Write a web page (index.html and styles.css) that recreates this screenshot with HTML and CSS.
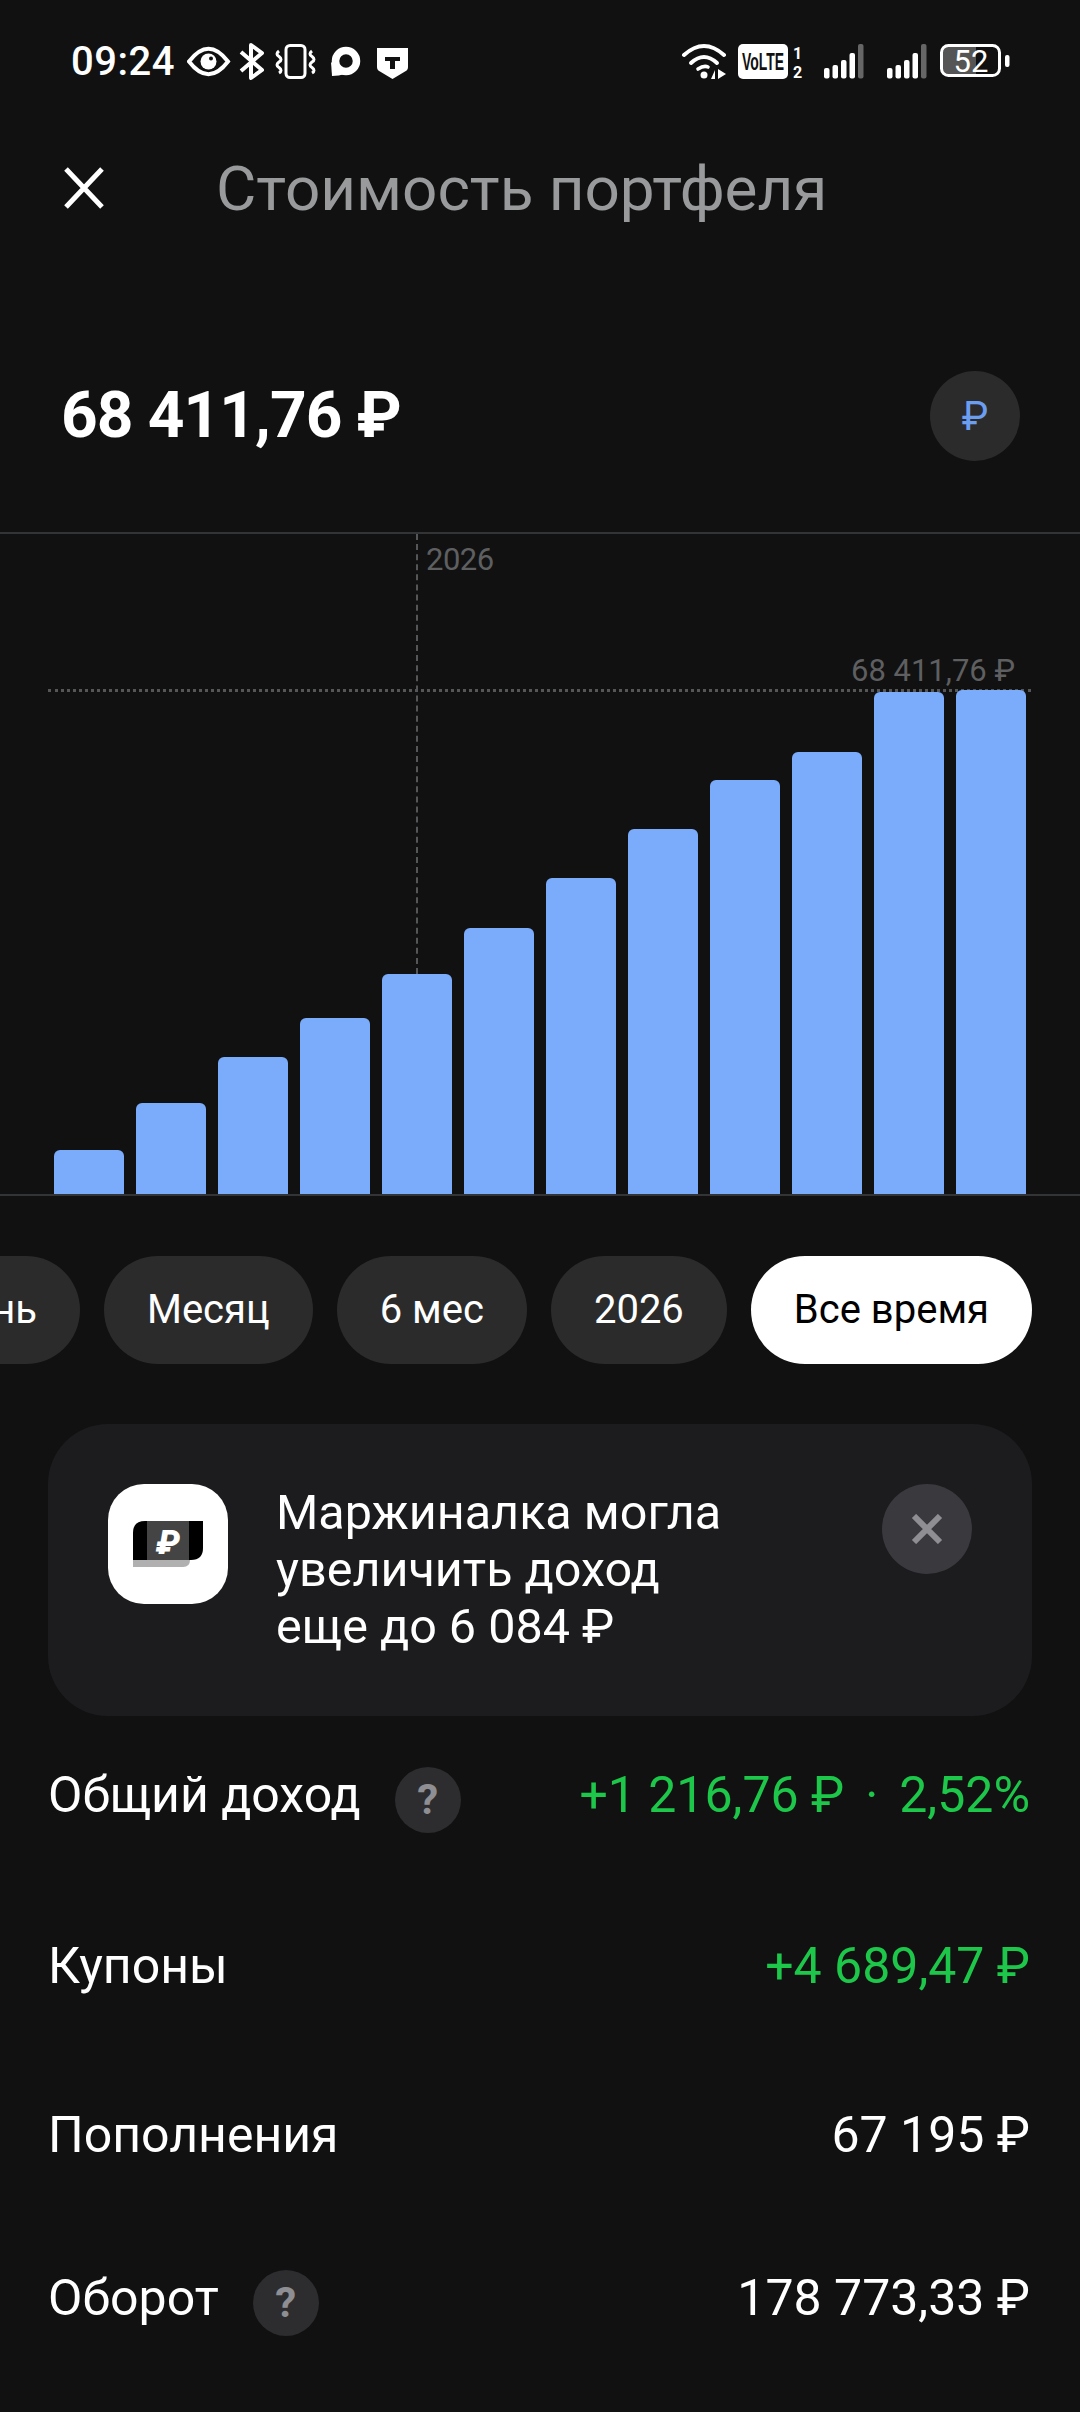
FILE: index.html
```html
<!DOCTYPE html>
<html lang="ru">
<head>
    <meta charset="UTF-8">
    <meta name="viewport" content="width=device-width, initial-scale=1.0">
    <title>Стоимость портфеля</title>
    <link rel="stylesheet" href="styles.css">
</head>
<body>
    <div class="status-bar">
        <div class="status-left">
            <span class="status-time">09:24</span>
            <svg class="status-icons-left" width="224" height="40" viewBox="187 42 224 40">
                <!-- eye -->
                <path d="M189 61.5Q208.5 36 228 61.5Q208.5 87 189 61.5Z" fill="none" stroke="#fff" stroke-width="4"/>
                <circle cx="208.5" cy="61.5" r="8" fill="#fff"/>
                <circle cx="211" cy="58.5" r="2" fill="#111112"/>
                <!-- bluetooth -->
                <path d="M241 52L262 70L251 78V45L262 53L241 71" fill="none" stroke="#fff" stroke-width="4" stroke-linejoin="round"/>
                <!-- vibrate -->
                <rect x="286" y="45.5" width="19" height="32" rx="4" fill="none" stroke="#fff" stroke-width="3"/>
                <path d="M279 51q-4 3 0 5.500q4 3 0 5.500q-4 3 0 5.500q4 3 0 5.500" fill="none" stroke="#fff" stroke-width="3"/>
                <path d="M312 51q-4 3 0 5.500q4 3 0 5.500q-4 3 0 5.500q4 3 0 5.500" fill="none" stroke="#fff" stroke-width="3"/>
                <!-- chat -->
                <circle cx="346" cy="61" r="10.500" fill="none" stroke="#fff" stroke-width="7.500"/>
                <path d="M331 62L332 76Q339 76 345 74Z" fill="#fff"/>
                <!-- shield -->
                <path d="M377 48H408V67Q408 70 405 71.500L392.500 79L380 71.500Q377 70 377 67Z" fill="#fff"/>
                <path d="M385 57H400V61H395V69H390V61H385Z" fill="#111112"/>
            </svg>
        </div>
        <svg class="status-icons-right" width="332" height="40" viewBox="680 42 332 40">
            <!-- wifi -->
            <path d="M684 55Q704 37 724 55" fill="none" stroke="#fff" stroke-width="4" stroke-linecap="round"/>
            <path d="M691 63Q704 51 717 63" fill="none" stroke="#fff" stroke-width="4" stroke-linecap="round"/>
            <path d="M698 69Q704 65 708 67" fill="none" stroke="#fff" stroke-width="3.600" stroke-linecap="round"/>
            <circle cx="704" cy="75" r="3.500" fill="#fff"/>
            <path d="M715 70V79H711Z M718 69V79L726 74Z" fill="#fff"/>
            <!-- volte -->
            <rect x="738" y="44" width="50" height="35" rx="5" fill="#fff"/>
            <text class="volte-text" x="742" y="70" textLength="42" lengthAdjust="spacingAndGlyphs">VoLTE</text>
            <text class="sim-text" x="793" y="59">1</text>
            <text class="sim-text" x="793" y="78">2</text>
            <!-- signal 1 -->
            <rect x="824" y="68" width="5.500" height="10.500" rx="2" fill="#fff"/>
            <rect x="832.500" y="65" width="5.500" height="13.500" rx="2" fill="#fff"/>
            <rect x="841" y="60" width="5.500" height="18.500" rx="2" fill="#fff"/>
            <rect x="849.500" y="53" width="5.500" height="25.500" rx="2" fill="#fff"/>
            <rect x="858" y="44" width="5.500" height="34.500" rx="2" fill="#666"/>
            <!-- signal 2 -->
            <rect x="887" y="68" width="5.500" height="10.500" rx="2" fill="#fff"/>
            <rect x="895.500" y="65" width="5.500" height="13.500" rx="2" fill="#fff"/>
            <rect x="904" y="60" width="5.500" height="18.500" rx="2" fill="#fff"/>
            <rect x="912.500" y="53" width="5.500" height="25.500" rx="2" fill="#fff"/>
            <rect x="921" y="44" width="5.500" height="34.500" rx="2" fill="#666"/>
            <!-- battery -->
            <path d="M976 46H949Q942 46 942 53V68Q942 75 949 75H976Z" fill="#555"/>
            <rect x="941.500" y="45.500" width="58" height="30" rx="7" fill="none" stroke="#fff" stroke-width="3"/>
            <rect x="1005" y="55" width="4.500" height="12" rx="2" fill="#fff"/>
            <text class="battery-text" x="971" y="72" text-anchor="middle">52</text>
        </svg>
    </div>

    <div class="header">
        <svg class="close-icon" width="40" height="42" viewBox="0 0 40 42">
            <path d="M2 2L38 40M38 2L2 40" stroke="#fff" stroke-width="5" fill="none"/>
        </svg>
        <h1 class="title">Стоимость портфеля</h1>
    </div>

    <div class="total">
        <span class="total-value">68 411,76 ₽</span>
        <div class="currency-btn">₽</div>
    </div>

    <div class="chart">
        <div class="guide-year"></div>
        <span class="label-year">2026</span>
        <div class="guide-value"></div>
        <span class="label-value">68 411,76 ₽</span>
        <div class="bars">
            <div class="bar" style="height: 44px"></div>
            <div class="bar" style="height: 91px"></div>
            <div class="bar" style="height: 137px"></div>
            <div class="bar" style="height: 176px"></div>
            <div class="bar" style="height: 220px"></div>
            <div class="bar" style="height: 266px"></div>
            <div class="bar" style="height: 316px"></div>
            <div class="bar" style="height: 365px"></div>
            <div class="bar" style="height: 414px"></div>
            <div class="bar" style="height: 442px"></div>
            <div class="bar" style="height: 502px"></div>
            <div class="bar" style="height: 504px"></div>
        </div>
    </div>

    <div class="chips">
        <div class="chip">День</div>
        <div class="chip">Месяц</div>
        <div class="chip">6 мес</div>
        <div class="chip">2026</div>
        <div class="chip chip-active">Все время</div>
    </div>

    <div class="promo">
        <div class="promo-icon">
            <svg width="70" height="46" viewBox="133 1523 70 46">
                <path d="M133 1540H190V1562Q190 1569 183 1569H133Z" fill="#b0b0b0"/>
                <path d="M145 1523H203V1550Q203 1562 191 1562H133V1535Q133 1523 145 1523Z" fill="#000"/>
                <rect x="147" y="1523" width="42" height="39" fill="#444"/>
                <text class="promo-ruble" x="168" y="1556" text-anchor="middle">₽</text>
            </svg>
        </div>
        <div class="promo-text">Маржиналка могла<br>увеличить доход<br>еще до 6 084 ₽</div>
        <div class="promo-close">
            <svg width="32" height="30" viewBox="0 0 32 30">
                <path d="M3 2L29 28M29 2L3 28" stroke="#8e8e93" stroke-width="6" fill="none"/>
            </svg>
        </div>
    </div>

    <div class="rows">
        <div class="row row-income">
            <div class="row-label">
                <span>Общий доход</span>
                <span class="help">?</span>
            </div>
            <span class="row-value green">+1 216,76 ₽<span class="dot">·</span>2,52%</span>
        </div>
        <div class="row row-coupons">
            <div class="row-label"><span>Купоны</span></div>
            <span class="row-value green">+4 689,47 ₽</span>
        </div>
        <div class="row row-topup">
            <div class="row-label"><span>Пополнения</span></div>
            <span class="row-value">67 195 ₽</span>
        </div>
        <div class="row">
            <div class="row-label">
                <span>Оборот</span>
                <span class="help">?</span>
            </div>
            <span class="row-value">178 773,33 ₽</span>
        </div>
    </div>
</body>
</html>
```

FILE: styles.css
```css
body {
    font-family: Roboto, "Noto Sans", sans-serif;
    background-color: #111112;
    color: #ffffff;
    margin: 0;
    padding: 0;
    width: 1080px;
    height: 2412px;
    overflow: hidden;
}

/* status bar */
.status-bar {
    height: 122px;
    display: flex;
    justify-content: space-between;
    align-items: flex-start;
    padding: 42px 68px 0 71px;
    box-sizing: border-box;
}

.status-left {
    display: flex;
    align-items: center;
    gap: 12px;
}

.status-time {
    width: 104px;
    font-size: 40px;
    line-height: 40px;
    font-weight: 500;
    letter-spacing: 0.5px;
}

.status-icons-left,
.status-icons-right {
    display: block;
}

.volte-text {
    font-family: "Liberation Sans", sans-serif;
    font-size: 24px;
    font-weight: 700;
    fill: #111112;
}

.sim-text {
    font-size: 16px;
    font-weight: 700;
    fill: #fff;
}

.battery-text {
    font-size: 31px;
    font-weight: 400;
    fill: #fff;
}

/* header */
.header {
    height: 132px;
    display: flex;
    align-items: center;
    padding: 0 0 2px 64px;
    gap: 112px;
}

.title {
    margin: 0;
    font-size: 62px;
    font-weight: 400;
    color: #999a9b;
}

/* total */
.total {
    display: flex;
    justify-content: space-between;
    align-items: center;
    padding: 115px 60px 71px 61px;
}

.total-value {
    font-size: 64px;
    line-height: 84px;
    font-weight: 700;
    letter-spacing: -0.9px;
}

.currency-btn {
    width: 90px;
    height: 90px;
    border-radius: 50%;
    background-color: #2b2b2c;
    color: #6b9df0;
    font-size: 40px;
    font-weight: 400;
    display: flex;
    justify-content: center;
    align-items: center;
}

/* chart */
.chart {
    position: relative;
    height: 660px;
    border-top: 2px solid #333435;
    border-bottom: 2px solid #333435;
}

.bars {
    height: 100%;
    display: flex;
    align-items: flex-end;
    gap: 12px;
    padding-left: 54px;
}

.bar {
    position: relative;
    width: 70px;
    background-color: #7aacfb;
    border-radius: 6px 6px 0 0;
}

.guide-year {
    position: absolute;
    left: 416px;
    top: 0;
    height: 440px;
    border-left: 2px dashed #555657;
}

.guide-value {
    position: absolute;
    left: 48px;
    right: 49px;
    top: 155px;
    border-top: 3px dotted #555657;
}

.label-year {
    position: absolute;
    left: 426px;
    top: 7px;
    font-size: 31px;
    letter-spacing: -0.5px;
    color: #5e5f60;
}

.label-value {
    position: absolute;
    right: 65px;
    top: 118px;
    font-size: 31px;
    color: #5e5f60;
}

/* period chips */
.chips {
    display: flex;
    justify-content: flex-end;
    gap: 24px;
    margin-top: 60px;
    padding-right: 48px;
}

.chip {
    flex-shrink: 0;
    height: 108px;
    line-height: 108px;
    padding: 0 43px;
    border-radius: 54px;
    background-color: #2b2b2c;
    font-size: 40px;
}

.chip-active {
    background-color: #ffffff;
    color: #000000;
}

/* promo card */
.promo {
    height: 292px;
    margin: 60px 48px 0;
    padding: 60px 60px 0;
    box-sizing: border-box;
    display: flex;
    align-items: flex-start;
    gap: 48px;
    background-color: #1c1c1e;
    border-radius: 60px;
}

.promo-icon {
    width: 120px;
    height: 120px;
    flex-shrink: 0;
    display: flex;
    justify-content: center;
    align-items: center;
    background-color: #ffffff;
    border-radius: 36px;
}

.promo-ruble {
    font-size: 34px;
    font-weight: 900;
    font-style: italic;
    fill: #fff;
}

.promo-text {
    flex: 1;
    font-size: 48.5px;
    line-height: 57px;
}

.promo-close {
    width: 90px;
    height: 90px;
    flex-shrink: 0;
    display: flex;
    justify-content: center;
    align-items: center;
    background-color: #3a3a3e;
    border-radius: 50%;
}

/* income rows */
.rows {
    margin-top: 51px;
    padding: 0 50px 0 48px;
}

.row {
    height: 66px;
    display: flex;
    justify-content: space-between;
    align-items: flex-start;
    font-size: 50px;
    line-height: 56px;
}

.row-income {
    height: 171px;
}

.row-coupons {
    height: 169px;
}

.row-topup {
    height: 163px;
}

.row-label {
    display: flex;
    align-items: flex-start;
    gap: 34px;
}

.row-value {
    white-space: nowrap;
}

.dot {
    margin: 0 21px;
}

.green {
    color: #1dc74a;
}

.help {
    width: 66px;
    height: 66px;
    border-radius: 50%;
    background-color: #2d2d30;
    color: #8e8e93;
    font-size: 42px;
    font-weight: 700;
    line-height: 66px;
    text-align: center;
}
```
